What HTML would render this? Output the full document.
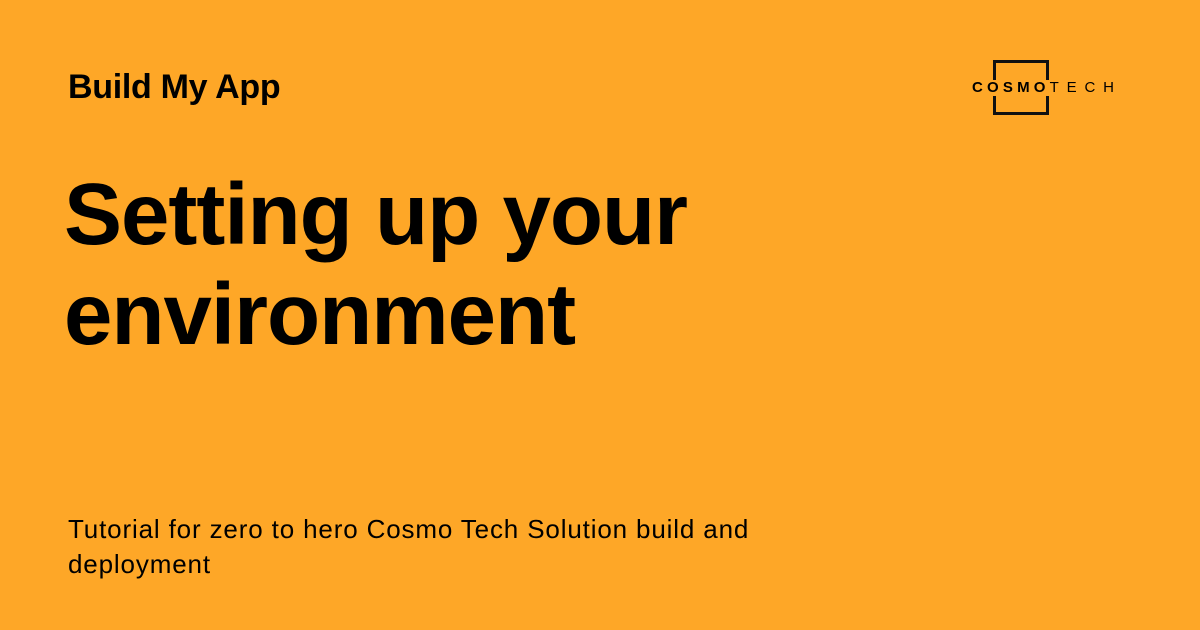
<!DOCTYPE html>
<html><head><style>
html,body{margin:0;padding:0}
body{width:1200px;height:630px;background:#FEA727;position:relative;overflow:hidden;font-family:"Liberation Sans",sans-serif;color:#000}
.a{position:absolute;left:68px;top:68px;font-size:34px;font-weight:bold;letter-spacing:-0.3px}
.t{position:absolute;left:64px;top:165px;font-size:87px;font-weight:bold;line-height:100px;letter-spacing:-1px}
.s{position:absolute;left:68px;top:512px;font-size:26px;line-height:35px;width:760px;letter-spacing:0.85px}
.sq{position:absolute;left:993px;top:60px;width:50px;height:49px;border:3px solid #111}
.gap{position:absolute;background:#FEA727;height:16px;top:80px}
.logo{position:absolute;left:972px;top:78px;font-size:15px;letter-spacing:4.2px;line-height:20px;white-space:nowrap}
.logo span{letter-spacing:7.8px}
</style></head><body>
<div class="a">Build My App</div>
<div class="t">Setting up your<br>environment</div>
<div class="s">Tutorial for zero to hero Cosmo Tech Solution build and deployment</div>
<div class="sq"></div>
<div class="gap" style="left:990px;width:8px"></div>
<div class="gap" style="left:1043px;width:8px"></div>
<div class="logo"><b>COSMO</b><span>TECH</span></div>
</body></html>
